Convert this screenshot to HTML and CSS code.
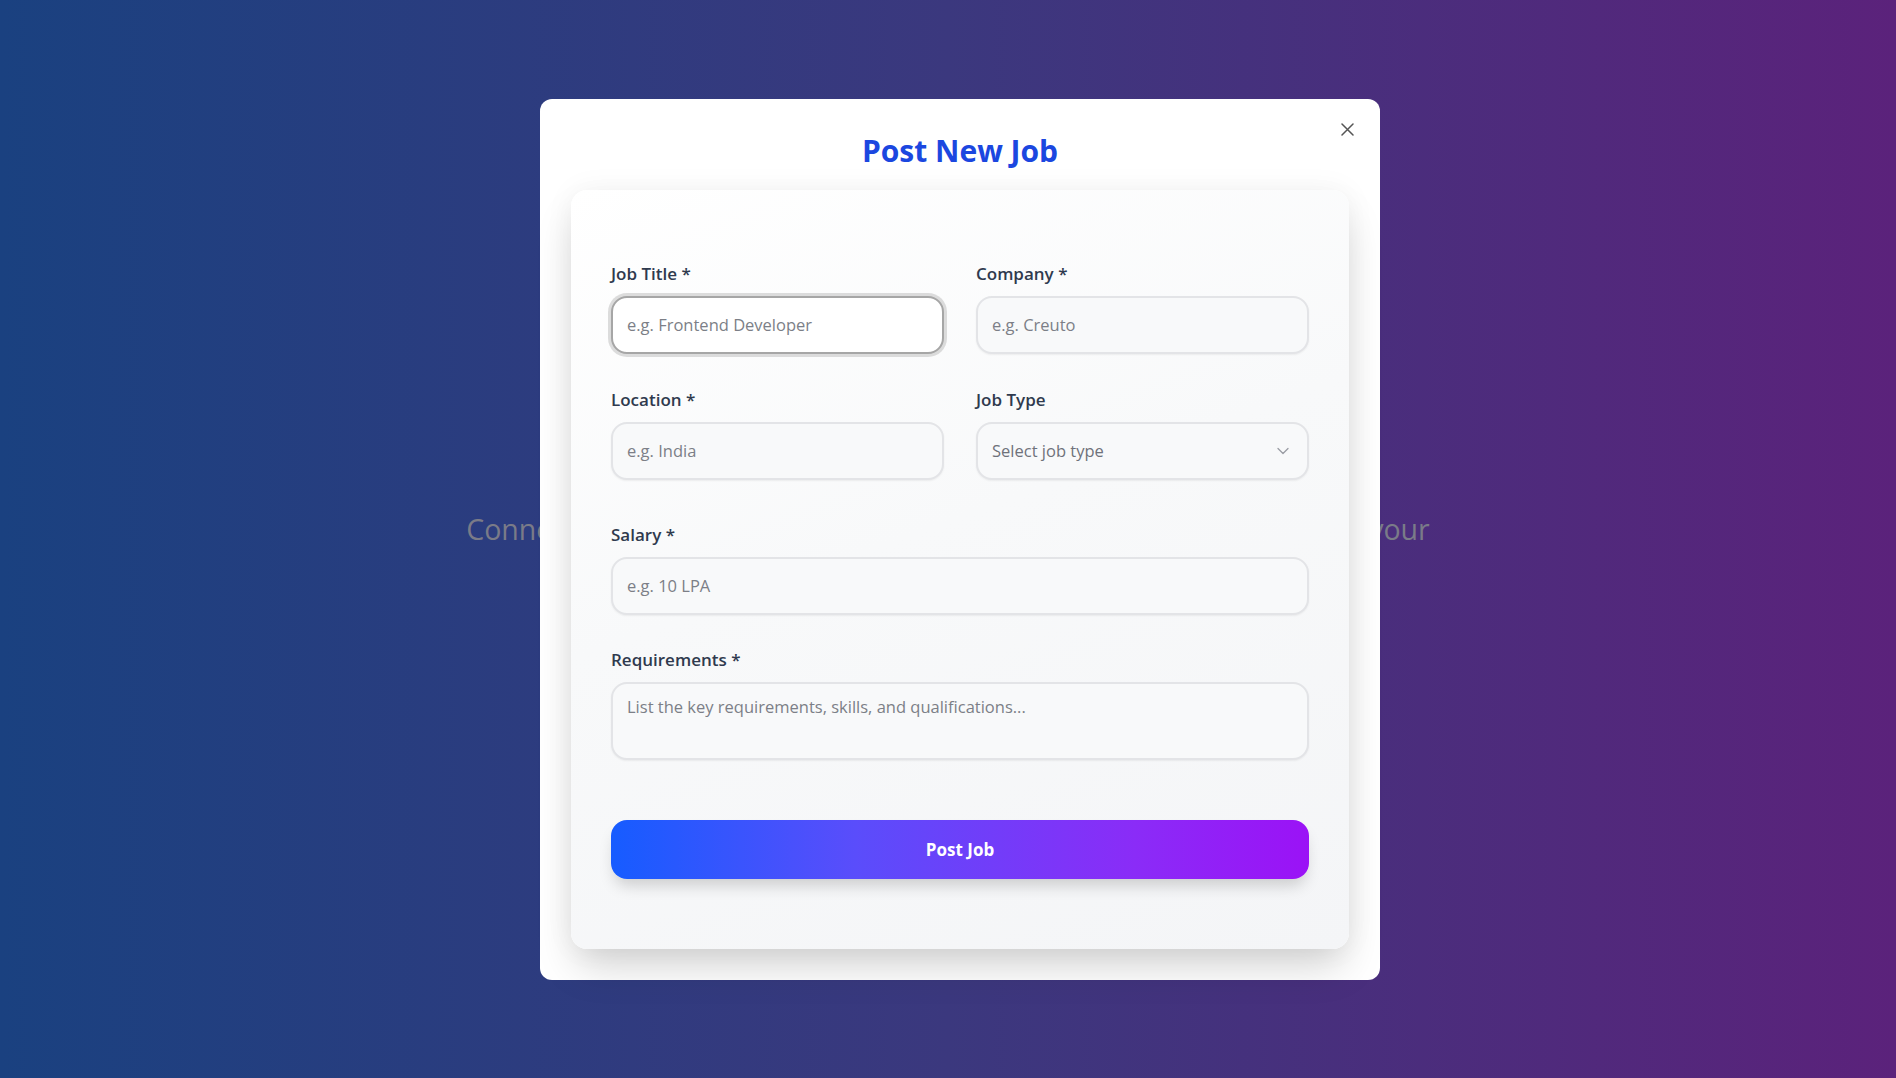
FILE: index.html
```html
<!DOCTYPE html>
<html lang="en">
<head>
<meta charset="utf-8">
<title>Post New Job</title>
<link rel="stylesheet" href="styles.css">
</head>
<body>
<main class="hero">
  <p class="hero-text">Connect with leading employers and explore opportunities that suit your<br>skills and career goals.</p>
</main>

<div class="overlay">
  <div class="modal">
    <button class="close" type="button" aria-label="Close">
      <svg width="13" height="13" viewBox="0 0 13 13"><path d="M1 1L12 12M12 1L1 12" stroke="#555" stroke-width="1.5" stroke-linecap="round"/></svg>
    </button>
    <h2 class="modal-title">Post New Job</h2>
    <form class="card">
      <div class="grid">
        <div class="field">
          <label class="label">Job Title *</label>
          <input class="input input-focus" type="text" placeholder="e.g. Frontend Developer">
        </div>
        <div class="field">
          <label class="label">Company *</label>
          <input class="input" type="text" placeholder="e.g. Creuto">
        </div>
        <div class="field">
          <label class="label">Location *</label>
          <input class="input" type="text" placeholder="e.g. India">
        </div>
        <div class="field">
          <label class="label">Job Type</label>
          <div class="select-wrap">
            <select class="input select">
              <option>Select job type</option>
            </select>
            <svg class="chevron" width="12" height="8" viewBox="0 0 12 8"><path d="M1 1.5L6 6.5L11 1.5" fill="none" stroke="#9a9ca3" stroke-width="1.3" stroke-linecap="round" stroke-linejoin="round"/></svg>
          </div>
        </div>
      </div>
      <div class="field field-salary">
        <label class="label">Salary *</label>
        <input class="input" type="text" placeholder="e.g. 10 LPA">
      </div>
      <div class="field field-req">
        <label class="label">Requirements *</label>
        <textarea class="input textarea" placeholder="List the key requirements, skills, and qualifications..."></textarea>
      </div>
      <button class="submit" type="button">Post Job</button>
    </form>
  </div>
</div>
</body>
</html>
```
FILE: styles.css
```css
* { box-sizing: border-box; }
html, body { margin: 0; padding: 0; }
body {
  font-family: "Open Sans", "Liberation Sans", sans-serif;
  background: linear-gradient(90deg, #1a4180 0%, #3b387e 50%, #5b227b 100%);
  min-height: 100vh;
  overflow: hidden;
}
.hero {
  height: 100vh;
  display: flex;
  align-items: center;
  justify-content: center;
  padding-top: 1px;
}
.hero-text {
  margin: 0;
  color: #7a7b88;
  font-size: 28.5px;
  line-height: 40px;
  text-align: center;
  white-space: nowrap;
  transform: translateY(9px);
}
.overlay {
  position: fixed;
  inset: 0;
  display: flex;
  align-items: center;
  justify-content: center;
  padding-left: 24px;
}
.modal {
  position: relative;
  width: 840px;
  background: #fff;
  border-radius: 12px;
  padding: 32px 31px 31px;
}
.close {
  position: absolute;
  top: 24px;
  right: 26px;
  width: 13px;
  height: 13px;
  padding: 0;
  border: 0;
  background: none;
  display: flex;
}
.modal-title {
  margin: 0 0 19px;
  text-align: center;
  font-size: 30px;
  line-height: 40px;
  font-weight: 700;
  color: #1b47e0;
}
.card {
  background: linear-gradient(160deg, #ffffff 0%, #f8f9fa 45%, #f4f5f7 100%);
  border-radius: 16px;
  padding: 72px 40px 70px;
  box-shadow: 0 22px 40px -6px rgba(0,0,0,0.18), 0 0 30px rgba(0,0,0,0.05);
}
.grid {
  display: grid;
  grid-template-columns: 1fr 1fr;
  column-gap: 32px;
  row-gap: 34px;
}
.field { display: flex; flex-direction: column; }
.field-salary { margin-top: 43px; }
.field-req { margin-top: 33px; }
.label {
  font-size: 17px;
  line-height: 24px;
  font-weight: 600;
  color: #2f3a4e;
  margin-bottom: 10px;
}
.input {
  width: 100%;
  height: 58px;
  border: 2px solid #e3e4e7;
  border-radius: 16px;
  background: #f8f9fa;
  padding: 0 14px;
  font-family: inherit;
  font-size: 16.5px;
  color: #333;
  box-shadow: 0 1px 2px rgba(0,0,0,0.06);
  outline: none;
}
.input::placeholder { color: #7c7f87; }
.input-focus {
  background: #fff;
  border-color: #a6a6a6;
  box-shadow: 0 0 0 3px rgba(180,180,180,0.45);
}
.select-wrap { position: relative; }
.select {
  appearance: none;
  -webkit-appearance: none;
  color: #6f727a;
}
.chevron {
  position: absolute;
  right: 20px;
  top: 25px;
}
.textarea {
  height: 78px;
  padding: 11px 14px;
  line-height: 24px;
  resize: none;
  display: block;
}
.submit {
  display: block;
  width: 100%;
  height: 59px;
  margin-top: 60px;
  border: 0;
  border-radius: 16px;
  background: linear-gradient(90deg, #165cff 0%, #5a4dfb 35%, #8a2cf7 75%, #9b12f6 100%);
  color: #fff;
  font-family: inherit;
  font-size: 17px;
  font-weight: 700;
  box-shadow: 0 10px 16px -4px rgba(0,0,0,0.18);
}
```
